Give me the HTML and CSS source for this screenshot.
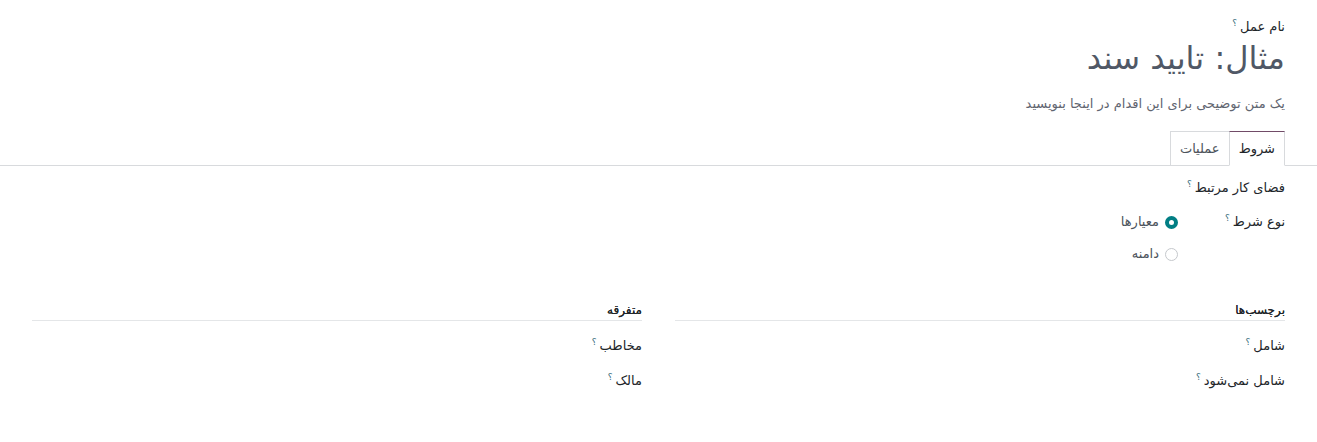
FILE: index.html
```html
<!DOCTYPE html>
<html lang="fa" dir="rtl">
<head>
<meta charset="utf-8">
<link rel="stylesheet" href="styles.css">
</head>
<body>
<div class="sheet">
  <div class="title-block">
    <label class="top-label">نام عمل<sup class="help">؟</sup></label>
    <h1 class="title">مثال: تایید سند</h1>
    <p class="desc">یک متن توضیحی برای این اقدام در اینجا بنویسید</p>
  </div>
  <div class="notebook">
    <ul class="tabs">
      <li class="tab active">شروط</li>
      <li class="tab">عملیات</li>
    </ul>
  </div>
  <div class="tab-content">
    <div class="field-row single">
      <label class="lbl">فضای کار مرتبط<sup class="help">؟</sup></label>
    </div>
    <div class="field-row second">
      <label class="lbl lbl-col">نوع شرط<sup class="help">؟</sup></label>
      <div class="radios">
        <div class="radio"><span class="dot checked"></span><span>معیارها</span></div>
        <div class="radio"><span class="dot"></span><span>دامنه</span></div>
      </div>
    </div>
    <div class="groups">
      <div class="group">
        <div class="group-title">برچسب‌ها</div>
        <div class="g-row"><label class="lbl">شامل<sup class="help">؟</sup></label></div>
        <div class="g-row"><label class="lbl">شامل نمی‌شود<sup class="help">؟</sup></label></div>
      </div>
      <div class="group">
        <div class="group-title">متفرقه</div>
        <div class="g-row"><label class="lbl">مخاطب<sup class="help">؟</sup></label></div>
        <div class="g-row"><label class="lbl">مالک<sup class="help">؟</sup></label></div>
      </div>
    </div>
  </div>
</div>
</body>
</html>
```
FILE: styles.css
```css
* { box-sizing: border-box; }
html, body { margin: 0; padding: 0; background: #fff; }
body {
  font-family: "DejaVu Sans", sans-serif;
  font-size: 13px;
  color: #212529;
  direction: rtl;
}
.sheet { padding: 17px 0 0; }
.title-block { padding: 0 32px; }
.top-label {
  display: block;
  font-size: 13px;
  line-height: 20px;
}
.help {
  color: #3a6f7e;
  font-size: 9px;
  padding: 0 3px;
  vertical-align: super;
  line-height: 0;
}
.title {
  margin: 1px 0 0;
  font-size: 32px;
  font-weight: 400;
  color: #505866;
  line-height: 40px;
}
.desc {
  margin: 16px 0 0;
  color: #5f6570;
  font-size: 13px;
  line-height: 20px;
}
.notebook { margin-top: 17px; border-bottom: 1px solid #d8dadd; }
.tabs {
  list-style: none;
  margin: 0 32px 0 0;
  padding: 0;
  display: flex;
}
.tab {
  height: 35px;
  padding: 0 9px;
  display: flex;
  align-items: center;
  margin-bottom: -1px;
  border: 1px solid #d8dadd;
  border-right: none;
  color: #4c535b;
  background: #fff;
}
.tab.active {
  border: 1px solid #d8dadd;
  border-top: 1px solid #714b67;
  border-bottom-color: #fff;
  color: #212529;
}
.tab-content { padding: 5px 32px 0; }
.field-row { display: flex; align-items: flex-start; }
.field-row.single { height: 34px; align-items: center; }
.field-row.second { margin-top: 5px; }
.lbl { line-height: 20px; }
.lbl-col { width: 107px; padding-top: 2px; }
.radios { display: flex; flex-direction: column; gap: 12px; padding-top: 2px; }
.radio { display: flex; align-items: center; gap: 6px; color: #4c535b; line-height: 20px; }
.dot {
  width: 13px; height: 13px; border-radius: 50%;
  border: 1px solid #c5c8cc; background: #fff;
}
.dot.checked { border: 4px solid #017e84; }
.groups {
  margin-top: 36px;
  display: grid;
  grid-template-columns: 1fr 1fr;
  column-gap: 33px;
}
.group-title {
  font-size: 12px;
  line-height: 20px;
  color: #212529;
  text-shadow: 0 0 0.4px #212529;
  border-bottom: 1px solid #e4e6e8;
  margin-bottom: 15px;
}
.g-row { height: 35px; }
```
